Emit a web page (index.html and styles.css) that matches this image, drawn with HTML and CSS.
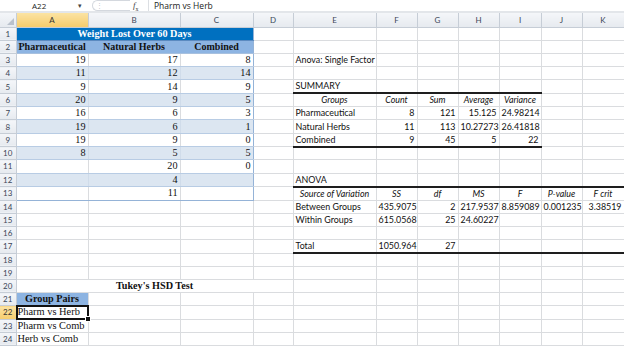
FILE: index.html
```html
<!DOCTYPE html>
<html lang="en">
<head>
    <meta charset="UTF-8">
    <title>Weight Lost - Anova</title>
    <link rel="stylesheet" href="styles.css">
</head>
<body>

    <!-- formula bar -->
    <div class="formula-bar">
        <div class="name-box">A22</div>
        <div class="name-arrow">&#9662;</div>
        <div class="splitter"><span>&#8942;</span></div>
        <div class="fx"><i>f</i><sub>x</sub></div>
        <div class="formula-text">Pharm vs Herb</div>
    </div>
    <div class="bar-gap"></div>

    <table class="sheet">
        <colgroup>
            <col style="width:16px">
            <col style="width:72px">
            <col style="width:92px">
            <col style="width:73px">
            <col style="width:40px">
            <col style="width:83px">
            <col style="width:41px">
            <col style="width:41px">
            <col style="width:41px">
            <col style="width:42px">
            <col style="width:41px">
            <col style="width:42px">
        </colgroup>
        <thead>
            <tr>
                <th class="corner"><span class="corner-tri"></span></th>
                <th class="sel">A</th><th>B</th><th>C</th><th>D</th><th>E</th><th>F</th><th>G</th><th>H</th><th>I</th><th>J</th><th>K</th>
            </tr>
        </thead>
        <tbody>
            <tr>
                <th>1</th>
                <td class="title" colspan="3">Weight Lost Over 60 Days</td>
                <td></td><td></td><td></td><td></td><td></td><td></td><td></td><td></td>
            </tr>
            <tr>
                <th>2</th>
                <td class="hd">Pharmaceutical</td><td class="hd">Natural Herbs</td><td class="hd last">Combined</td>
                <td></td><td></td><td></td><td></td><td></td><td></td><td></td><td></td>
            </tr>
            <tr>
                <th>3</th>
                <td class="num">19</td><td class="num">17</td><td class="num last">8</td>
                <td></td><td class="txt">Anova: Single Factor</td><td></td><td></td><td></td><td></td><td></td><td></td>
            </tr>
            <tr class="band">
                <th>4</th>
                <td class="num">11</td><td class="num">12</td><td class="num last">14</td>
                <td></td><td></td><td></td><td></td><td></td><td></td><td></td><td></td>
            </tr>
            <tr>
                <th>5</th>
                <td class="num">9</td><td class="num">14</td><td class="num last">9</td>
                <td></td><td class="txt">SUMMARY</td><td></td><td></td><td></td><td></td><td></td><td></td>
            </tr>
            <tr class="band">
                <th>6</th>
                <td class="num">20</td><td class="num">9</td><td class="num last">5</td>
                <td></td>
                <td class="txt it top">Groups</td><td class="txt it top">Count</td><td class="txt it top">Sum</td><td class="txt it top">Average</td><td class="txt it top">Variance</td>
                <td></td><td></td>
            </tr>
            <tr>
                <th>7</th>
                <td class="num">16</td><td class="num">6</td><td class="num last">3</td>
                <td></td>
                <td class="txt">Pharmaceutical</td><td class="val">8</td><td class="val">121</td><td class="val">15.125</td><td class="val">24.98214</td>
                <td></td><td></td>
            </tr>
            <tr class="band">
                <th>8</th>
                <td class="num">19</td><td class="num">6</td><td class="num last">1</td>
                <td></td>
                <td class="txt">Natural Herbs</td><td class="val">11</td><td class="val">113</td><td class="val">10.27273</td><td class="val">26.41818</td>
                <td></td><td></td>
            </tr>
            <tr>
                <th>9</th>
                <td class="num">19</td><td class="num">9</td><td class="num last">0</td>
                <td></td>
                <td class="txt bot">Combined</td><td class="val bot">9</td><td class="val bot">45</td><td class="val bot">5</td><td class="val bot">22</td>
                <td></td><td></td>
            </tr>
            <tr class="band">
                <th>10</th>
                <td class="num">8</td><td class="num">5</td><td class="num last">5</td>
                <td></td><td></td><td></td><td></td><td></td><td></td><td></td><td></td>
            </tr>
            <tr>
                <th>11</th>
                <td class="num"></td><td class="num">20</td><td class="num last">0</td>
                <td></td><td></td><td></td><td></td><td></td><td></td><td></td><td></td>
            </tr>
            <tr class="band">
                <th>12</th>
                <td class="num"></td><td class="num">4</td><td class="num last"></td>
                <td></td><td class="txt">ANOVA</td><td></td><td></td><td></td><td></td><td></td><td></td>
            </tr>
            <tr class="end">
                <th>13</th>
                <td class="num"></td><td class="num">11</td><td class="num last"></td>
                <td></td>
                <td class="txt it top">Source of Variation</td><td class="txt it top">SS</td><td class="txt it top">df</td><td class="txt it top">MS</td><td class="txt it top">F</td><td class="txt it top">P-value</td><td class="txt it top">F crit</td>
            </tr>
            <tr>
                <th>14</th>
                <td></td><td></td><td></td><td></td>
                <td class="txt">Between Groups</td><td class="val">435.9075</td><td class="val">2</td><td class="val">217.9537</td><td class="val">8.859089</td><td class="val">0.001235</td><td class="val">3.38519</td>
            </tr>
            <tr>
                <th>15</th>
                <td></td><td></td><td></td><td></td>
                <td class="txt">Within Groups</td><td class="val">615.0568</td><td class="val">25</td><td class="val">24.60227</td><td></td><td></td><td></td>
            </tr>
            <tr>
                <th>16</th>
                <td></td><td></td><td></td><td></td><td></td><td></td><td></td><td></td><td></td><td></td><td></td>
            </tr>
            <tr>
                <th>17</th>
                <td></td><td></td><td></td><td></td>
                <td class="txt bot">Total</td><td class="val bot">1050.964</td><td class="val bot">27</td><td class="bot"></td><td class="bot"></td><td class="bot"></td><td class="bot"></td>
            </tr>
            <tr>
                <th>18</th>
                <td></td><td></td><td></td><td></td><td></td><td></td><td></td><td></td><td></td><td></td><td></td>
            </tr>
            <tr>
                <th>19</th>
                <td></td><td></td><td></td><td></td><td></td><td></td><td></td><td></td><td></td><td></td><td></td>
            </tr>
            <tr>
                <th>20</th>
                <td class="tukey" colspan="4">Tukey's HSD Test</td>
                <td></td><td></td><td></td><td></td><td></td><td></td><td></td>
            </tr>
            <tr>
                <th>21</th>
                <td class="pairs-hd">Group Pairs</td>
                <td></td><td></td><td></td><td></td><td></td><td></td><td></td><td></td><td></td><td></td>
            </tr>
            <tr>
                <th class="sel">22</th>
                <td class="pair active">Pharm vs Herb</td>
                <td></td><td></td><td></td><td></td><td></td><td></td><td></td><td></td><td></td><td></td>
            </tr>
            <tr>
                <th>23</th>
                <td class="pair">Pharm vs Comb</td>
                <td></td><td></td><td></td><td></td><td></td><td></td><td></td><td></td><td></td><td></td>
            </tr>
            <tr>
                <th>24</th>
                <td class="pair">Herb vs Comb</td>
                <td></td><td></td><td></td><td></td><td></td><td></td><td></td><td></td><td></td><td></td>
            </tr>
        </tbody>
    </table>

</body>
</html>
```

FILE: styles.css
```css
body {
    margin: 0;
    background-color: white;
    width: 624px;
    height: 346px;
    overflow: hidden;
    font-family: Lato, "Open Sans", sans-serif;
}

/* formula bar */
.formula-bar {
    display: flex;
    align-items: center;
    height: 11px;
    background-color: white;
    font-family: "Open Sans", sans-serif;
    font-size: 8px;
    color: #222;
}

.name-box {
    width: 78px;
    padding-left: 32px;
    box-sizing: border-box;
}

.name-arrow {
    width: 14px;
    font-size: 7px;
    color: #444;
}

.splitter {
    width: 38px;
    height: 11px;
    border: 1px solid #d4d8de;
    border-right: none;
    border-radius: 6px 0 0 6px;
    box-sizing: border-box;
    color: #c4c8ce;
    font-size: 7px;
    line-height: 9px;
    padding-left: 3px;
}

.fx {
    width: 15px;
    height: 11px;
    line-height: 10px;
    font-family: "Liberation Serif", serif;
    font-size: 9px;
    color: #444;
    border-right: 1px solid #dcdfe3;
    margin-left: 3px;
}

.fx sub {
    font-size: 6px;
}

.formula-text {
    padding-left: 5px;
    font-size: 8.5px;
}

.bar-gap {
    height: 2px;
    background-color: #e3e6ea;
}

/* grid */
.sheet {
    width: 624px;
    table-layout: fixed;
    border-collapse: collapse;
}

.sheet tr {
    height: 13.2px;
}

.sheet thead tr {
    height: 14px;
}

.sheet td {
    padding: 0 2px;
    border-right: 1px solid #dadcdf;
    border-bottom: 1px solid #dadcdf;
    white-space: nowrap;
    overflow: visible;
    line-height: 12px;
    font-size: 8.9px;
    color: #111;
}

.sheet th {
    padding: 0;
    font-family: Lato, sans-serif;
    font-weight: normal;
    font-size: 8px;
    color: #3b4657;
    background: linear-gradient(#f4f6f9, #e6eaef);
    border-right: 1px solid #c6cdd6;
    border-bottom: 1px solid #c6cdd6;
    line-height: 12px;
    text-align: center;
}

.sheet th.sel {
    background: linear-gradient(#fbe3a3, #f5cc6c);
    color: #333;
}

.sheet th.corner {
    position: relative;
}

.corner-tri {
    position: absolute;
    right: 2px;
    bottom: 2px;
    width: 0;
    height: 0;
    border-left: 7px solid transparent;
    border-bottom: 7px solid #b9c1cc;
}

/* weight table */
.title {
    background-color: #0070c0;
    color: white !important;
    font-family: "Liberation Serif", serif;
    font-weight: bold;
    font-size: 10.2px !important;
    text-align: center;
    border-right: 1px solid #95b3d7 !important;
    border-bottom: 1px solid #5b8ac0 !important;
}

.hd {
    background-color: #8db4e2;
    font-family: "Liberation Serif", serif;
    font-weight: bold;
    font-size: 10px !important;
    text-align: center;
    border-right: 1px solid #8db4e2 !important;
    border-bottom: 1px solid #a7c0de !important;
}

.num {
    font-family: "Liberation Serif", serif;
    font-size: 10.2px !important;
    text-align: right;
    border-bottom: 1px solid #b8cce4 !important;
}

.band .num {
    background-color: #dce6f1;
    border-right-color: #d0dcea;
}

.hd.last, .num.last {
    border-right: 1px solid #95b3d7 !important;
}

.end .num {
    border-bottom: 1px solid #95b3d7 !important;
}

/* anova output */
.txt {
    text-align: left;
}

.val {
    text-align: right;
}

.it {
    font-style: italic;
    text-align: center;
}

.top {
    border-top: 2px solid #1e1e1e;
}

.bot {
    border-bottom: 2px solid #1e1e1e !important;
}

/* tukey */
.tukey {
    font-family: "Liberation Serif", serif;
    font-weight: bold;
    font-size: 10.2px !important;
    text-align: center;
}

.pairs-hd {
    background-color: #8db4e2;
    font-family: "Liberation Serif", serif;
    font-weight: bold;
    font-size: 10.2px !important;
    text-align: center;
}

.pair {
    font-family: "Liberation Serif", serif;
    font-size: 10.4px !important;
    padding-left: 1px !important;
}

.active {
    position: relative;
}

.active::after {
    content: "";
    position: absolute;
    left: -1px;
    top: -1px;
    right: -1px;
    bottom: -1px;
    border: 2px solid #111;
}

.active::before {
    content: "";
    position: absolute;
    right: -3px;
    bottom: -3px;
    width: 4px;
    height: 4px;
    background-color: #111;
    border: 1px solid white;
    z-index: 1;
}
```
